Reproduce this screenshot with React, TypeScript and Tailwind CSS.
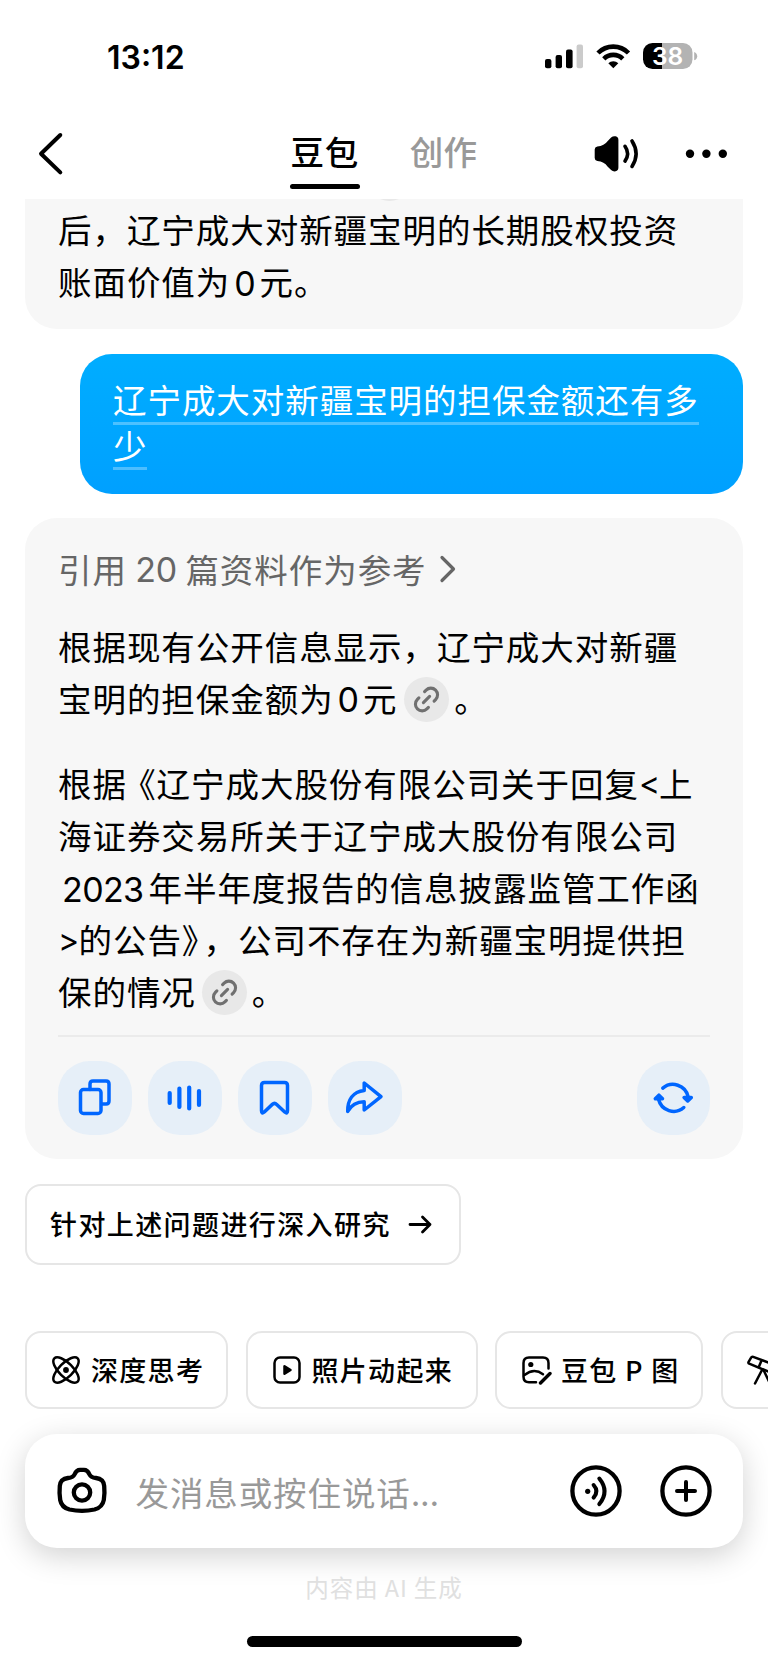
import type { ReactNode } from "react";

function Latin({ children, className = "" }: { children: ReactNode; className?: string }) {
  return <span className={`font-['Inter',sans-serif] ${className}`}>{children}</span>;
}

function Line({ children, className = "" }: { children: ReactNode; className?: string }) {
  return <div className={`flex h-[52.1px] items-center leading-[52px] whitespace-nowrap ${className}`}>{children}</div>;
}

function Cite({ className = "" }: { className?: string }) {
  return (
    <span className={`mt-[3px] flex size-[45px] shrink-0 items-center justify-center rounded-full bg-[#e8e8e8] ${className}`}>
      <svg width="45" height="45" viewBox="0 0 45 45" fill="none" stroke="#707070" strokeWidth="3.1" strokeLinecap="round">
        <path d="M20.600 14.600l1.500-1.500a6.700 6.700 0 0 1 9.500 9.500l-1.500 1.500" />
        <path d="M24.400 30.400l-1.500 1.500a6.700 6.700 0 0 1-9.500-9.500l1.500-1.500" />
        <path d="M19.400 25.600l6.200-6.200" />
      </svg>
    </span>
  );
}

function StatusBar() {
  return (
    <div className="flex h-[112px] items-center justify-between pr-[70px] pl-[107px]">
      <Latin className="pt-[3px] text-[32px] font-semibold tracking-[0px]">13:12</Latin>
      <svg width="154" height="30" viewBox="544 41 154 30">
        <rect x="545" y="59" width="6.400" height="9.300" rx="2" />
        <rect x="555.600" y="55" width="6.400" height="13.300" rx="2" />
        <rect x="566" y="49.600" width="6.600" height="18.700" rx="2" />
        <rect x="576.600" y="44.400" width="6.400" height="23.900" rx="2" fill="#cbcbcb" />
        <g fill="none" stroke="#000" strokeWidth="4.600">
          <path d="M598 53a21.500 21.500 0 0 1 30.500 0" />
          <path d="M603.800 58.800a13.400 13.400 0 0 1 19 0" />
        </g>
        <path d="M613.300 68.200l-5-4.900a7.100 7.100 0 0 1 10 0z" />
        <path d="M653 43h-0.500a9.500 9.500 0 0 0-9.500 9.500v7a9.500 9.500 0 0 0 9.500 9.500H662V43z" />
        <path d="M662 43h21a9.500 9.500 0 0 1 9.500 9.500v7a9.500 9.500 0 0 1-9.500 9.500H662z" fill="#b3b3b3" />
        <path d="M694.200 52c4 1.500 4 6.800 0 8.300z" fill="#b3b3b3" />
        <text x="667.600" y="65" textAnchor="middle" fill="#fff" fontFamily="Inter" fontSize="24.500" fontWeight="600">38</text>
      </svg>
    </div>
  );
}

function NavBar() {
  return (
    <div className="flex h-[87px] items-start justify-between pr-[40px] pl-[38px]">
      <svg className="mt-[19px]" width="26" height="46" viewBox="38 131 26 46" fill="none" stroke="#000" strokeWidth="4" strokeLinecap="round" strokeLinejoin="round">
        <path d="M60.300 135L41 153.700L60.300 172.400" />
      </svg>
      <div className="flex gap-[50px] pl-[111px]">
        <div className="flex w-[70px] flex-col items-center">
          <span className="mt-[12.500px] h-[52px] text-[33.500px] leading-[52px] font-medium tracking-[0.700px]">豆包</span>
          <span className="mt-[7.500px] h-[4.500px] w-[70px] rounded-full bg-black" />
        </div>
        <span className="mt-[12.500px] text-[33.500px] leading-[52px] font-medium tracking-[0.300px] text-[#999]">创作</span>
      </div>
      <svg className="mt-[19px]" width="136" height="46" viewBox="592 131 136 46">
        <path d="M594.700 149.500q0-2.500 2.600-3 7-.7 10.200-5.300l3.600-3.700q2-1.700 4.500-1.200 2.800.6 2.800 3.800v27.400q0 3.200-2.800 3.800-2.500.5-4.500-1.200l-3.600-3.700q-3.200-4.600-10.200-5.300-2.600-.5-2.600-3z" />
        <g fill="none" stroke="#000" strokeWidth="3.600" strokeLinecap="round">
          <path d="M625 146.300q5.200 7.400 0 14.800" />
          <path d="M632 141q8.200 12.700 0 25.400" />
        </g>
        <circle cx="690" cy="153.700" r="4.200" />
        <circle cx="706.400" cy="153.700" r="4.200" />
        <circle cx="722.800" cy="153.700" r="4.200" />
      </svg>
    </div>
  );
}

function Action({ children }: { children: ReactNode }) {
  return (
    <button className="flex size-[73.500px] items-center justify-center rounded-[32px] bg-[#e6eff8]">
      <svg width="48" height="48" viewBox="0 0 48 48" fill="none" stroke="#0066ff" strokeWidth="3.500" strokeLinecap="round" strokeLinejoin="round">
        {children}
      </svg>
    </button>
  );
}

function Chip({ icon, children, className = "" }: { icon: ReactNode; children?: ReactNode; className?: string }) {
  return (
    <div className={`flex h-[78px] shrink-0 items-center rounded-[16px] border-2 border-[#e6e6e6] bg-white text-[27px] font-medium tracking-[1.300px] whitespace-nowrap ${className}`}>
      <svg className="shrink-0" width="32" height="32" viewBox="0 0 32 32" fill="none" stroke="#000" strokeWidth="2.500" strokeLinecap="round" strokeLinejoin="round">
        {icon}
      </svg>
      {children}
    </div>
  );
}

export default function App() {
  return (
    <div className="flex h-[1663px] w-[768px] flex-col overflow-hidden bg-white font-['Noto_Sans_CJK_SC',sans-serif] text-black [text-spacing-trim:space-all]">
      <StatusBar />
      <NavBar />

      <div className="flex flex-col overflow-hidden px-[25px] text-[33.500px] tracking-[0.950px]">
        <div className="relative h-[129.700px] rounded-b-[32px] bg-[#f7f7f7] pt-[4px] pl-[33px]">
          <span className="absolute top-[-43px] left-[342px] size-[45px] rounded-full bg-[#e8e8e8]" />
          <Line>后，辽宁成大对新疆宝明的长期股权投资</Line>
          <Line>
            账面价值为<Latin className="w-[29.300px] pt-[5px] text-center text-[34px] tracking-normal">0</Latin>元。
          </Line>
        </div>

        <div className="mt-[25px] ml-[55px] flex h-[140px] flex-col items-start rounded-[32px] bg-linear-to-b from-[#00adff] to-[#00a0ff] pt-[25px] pl-[33px] text-white">
          <span className="h-[46.300px] border-b-[3.500px] border-white/30 leading-[40px] whitespace-nowrap">辽宁成大对新疆宝明的担保金额还有多</span>
          <span className="h-[45.300px] border-b-[3.500px] border-white/30 leading-[39px]">少</span>
        </div>

        <div className="mt-[24.500px] h-[640.500px] rounded-[32px] bg-[#f7f7f7] pr-[33px] pl-[33px]">
          <div className="flex h-[101.500px] items-center text-[#666]">
            引用<Latin className="w-[58.500px] pt-[2px] text-center text-[34px] tracking-[-0.300px]">20</Latin>篇资料作为参考
            <svg className="ml-[12.500px]" width="18" height="30" viewBox="0 0 18 30" fill="none" stroke="#666" strokeWidth="3.200" strokeLinecap="round" strokeLinejoin="round">
              <path d="M3 3.500L14.500 15L3 26.500" />
            </svg>
          </div>
          <Line>根据现有公开信息显示，辽宁成大对新疆</Line>
          <Line>
            宝明的担保金额为<Latin className="w-[29.300px] pt-[5px] text-center text-[34px] tracking-normal">0</Latin>元
            <Cite className="mr-[5px] ml-[7px]" />。
          </Line>
          <Line className="mt-[33px]">
            根据<span className="ml-[12px] [font-feature-settings:'halt']">《</span>辽宁成大股份有限公司关于回复<Latin className="w-[20px] pt-[3px] text-[32px] tracking-normal">&lt;</Latin>上
          </Line>
          <Line>海证券交易所关于辽宁成大股份有限公司</Line>
          <Line>
            <Latin className="ml-[4px] w-[86.500px] pt-[5px] text-[34px] tracking-[-0.600px]">2023</Latin>年半年度报告的信息披露监管工作函
          </Line>
          <Line>
            <Latin className="w-[20.500px] pt-[3px] text-[32px] tracking-normal">&gt;</Latin>的公告<span className="mr-[4px] [font-feature-settings:'halt']">》</span>，公司不存在为新疆宝明提供担
          </Line>
          <Line>
            保的情况
            <Cite className="mr-[5px] ml-[6px]" />。
          </Line>

          <div className="mt-[17.500px] flex justify-between border-t-2 border-[#ebebeb] pt-[24.500px]">
            <div className="flex gap-[16.500px]">
              <Action>
                <path d="M19 15.500V10q0-3 3-3h13q3 0 3 3v17q0 3-3 3H31" />
                <rect x="9.500" y="15.500" width="20.500" height="24" rx="3" />
              </Action>
              <Action>
                <path strokeWidth="4.200" d="M8.700 19v10M18.400 14.500v18.500M28.200 13.500v21M38 17v14" />
              </Action>
              <Action>
                <path d="M10.500 11.500q0-3 3-3h20q3 0 3 3v25.300q0 3.500-2.800 1.200l-8-7.600q-2.200-2-4.400 0l-8 7.600Q10.500 40.300 10.500 36.800z" />
              </Action>
              <Action>
                <path d="M23.200 9v7.500C12 17.800 6.500 26 6.700 37.500c4-7.300 9-9.700 16.500-9.700V36L40 22.700z" />
              </Action>
            </div>
            <Action>
              <path d="M13.800 14.200A15.500 15.500 0 0 1 39 22.500" />
              <path d="M34.800 33.500A15.500 15.500 0 0 1 9.600 25.500" />
              <path d="M35.100 23.400h7.200l-3.600 3.600z" fill="#0066ff" />
              <path d="M6.300 24.800h7.200L9.900 21.200z" fill="#0066ff" />
            </Action>
          </div>
        </div>

        <div className="mt-[25px] flex h-[81.500px] w-[435.500px] items-center rounded-[16px] border-2 border-[#e6e6e6] pl-[23px] text-[27px] font-medium tracking-[1.400px]">
          针对上述问题进行深入研究
          <svg className="ml-[17.500px]" width="26" height="24" viewBox="0 0 26 24" fill="none" stroke="#000" strokeWidth="2.800" strokeLinecap="round" strokeLinejoin="round">
            <path d="M2 12.500h20M14.500 5l7.500 7.500-7.500 7.500" />
          </svg>
        </div>
      </div>

      <div className="mt-[66px] flex gap-[17.500px] overflow-hidden pl-[25px]">
        <Chip
          className="w-[203px] gap-[9px] pl-[23px]"
          icon={
            <>
              <ellipse cx="16" cy="16" rx="16.500" ry="7" transform="rotate(45 16 16)" />
              <ellipse cx="16" cy="16" rx="16.500" ry="7" transform="rotate(-45 16 16)" />
              <circle cx="16" cy="16" r="2.900" fill="#000" stroke="none" />
            </>
          }
        >
          深度思考
        </Chip>
        <Chip
          className="w-[232px] gap-[9px] pl-[23px]"
          icon={
            <>
              <rect x="3.500" y="3.500" width="25" height="25" rx="5.500" />
              <path d="M13.500 12.200v7.600l6-3.800z" fill="#000" />
            </>
          }
        >
          照片动起来
        </Chip>
        <Chip
          className="w-[208px] gap-[9px] pl-[23px]"
          icon={
            <>
              <path d="M16 28.300H9q-5.500 0-5.500-5.500V9q0-5.500 5.500-5.500h14q5.500 0 5.500 5.500v5.500" />
              <circle cx="10.800" cy="10.500" r="2.600" fill="#000" stroke="none" />
              <path d="M4.500 21q9.500-7.500 18.500-.8" />
              <path d="M30 19.500L20.500 29" strokeWidth="3.400" />
            </>
          }
        >
          豆包 P 图
        </Chip>
        <Chip
          className="w-[203px] pl-[22px]"
          icon={
            <>
              <path d="M31 11.500L8.200 2.800q-1.400-.5-2.100.8L3.600 7.800q-.7 1.300.6 1.900L28 19.500M16.500 6.500l-2.700 6.500" />
              <path d="M17 16L10 29.500M18.500 16L25 29.500" />
            </>
          }
        />
      </div>

      <div className="mx-[25px] mt-[25px] flex h-[114px] shrink-0 items-center justify-between rounded-[32px] bg-white pr-[31px] pl-[31px] shadow-[0_8px_30px_rgba(0,0,0,0.18)]">
        <div className="flex items-center">
          <svg width="52" height="52" viewBox="0 0 52 52" fill="none" stroke="#000" strokeWidth="4.300" strokeLinejoin="round">
            <path d="M12 13C15.500 12.600 17.500 11.800 18.500 9.500C20 6 21.500 4.900 24 4.900H28C30.500 4.900 32 6 33.500 9.500C34.500 11.800 36.500 12.600 40 13C45.500 13.700 47.700 16 48.200 21C48.700 26 48.600 30 47.800 35C46.800 40.500 43.500 43.200 38.500 44.500C30.500 46.300 21.500 46.300 13.500 44.500C8.500 43.200 5.200 40.500 4.200 35C3.400 30 3.300 26 3.800 21C4.300 16 6.500 13.700 12 13Z" />
            <circle cx="26" cy="27.500" r="8.200" />
          </svg>
          <span className="ml-[27.500px] pt-[4px] text-[33.500px] tracking-[0.900px] text-[#999]">
            发消息或按住说话<Latin className="tracking-[-0.300px]">...</Latin>
          </span>
        </div>
        <svg width="142" height="54" viewBox="0 0 142 54" fill="none" stroke="#000" strokeWidth="4.300" strokeLinecap="round">
          <circle cx="26" cy="27" r="23.600" />
          <circle cx="17.700" cy="27.300" r="2.600" fill="#000" stroke="none" />
          <path d="M23.600 21q5.600 6.300 0 12.600" strokeWidth="4" />
          <path d="M29.300 14.500q10.500 12.800 0 25.600" strokeWidth="4" />
          <circle cx="116" cy="27" r="23.600" />
          <path d="M107 27h18M116 18v18" strokeWidth="4" />
        </svg>
      </div>

      <div className="mt-[22px] text-center text-[23.500px] leading-[34px] tracking-[0.900px] text-[#e0e0e0]">内容由 AI 生成</div>
      <div className="mx-auto mt-[32px] h-[10.500px] w-[275px] shrink-0 rounded-full bg-black" />
    </div>
  );
}
